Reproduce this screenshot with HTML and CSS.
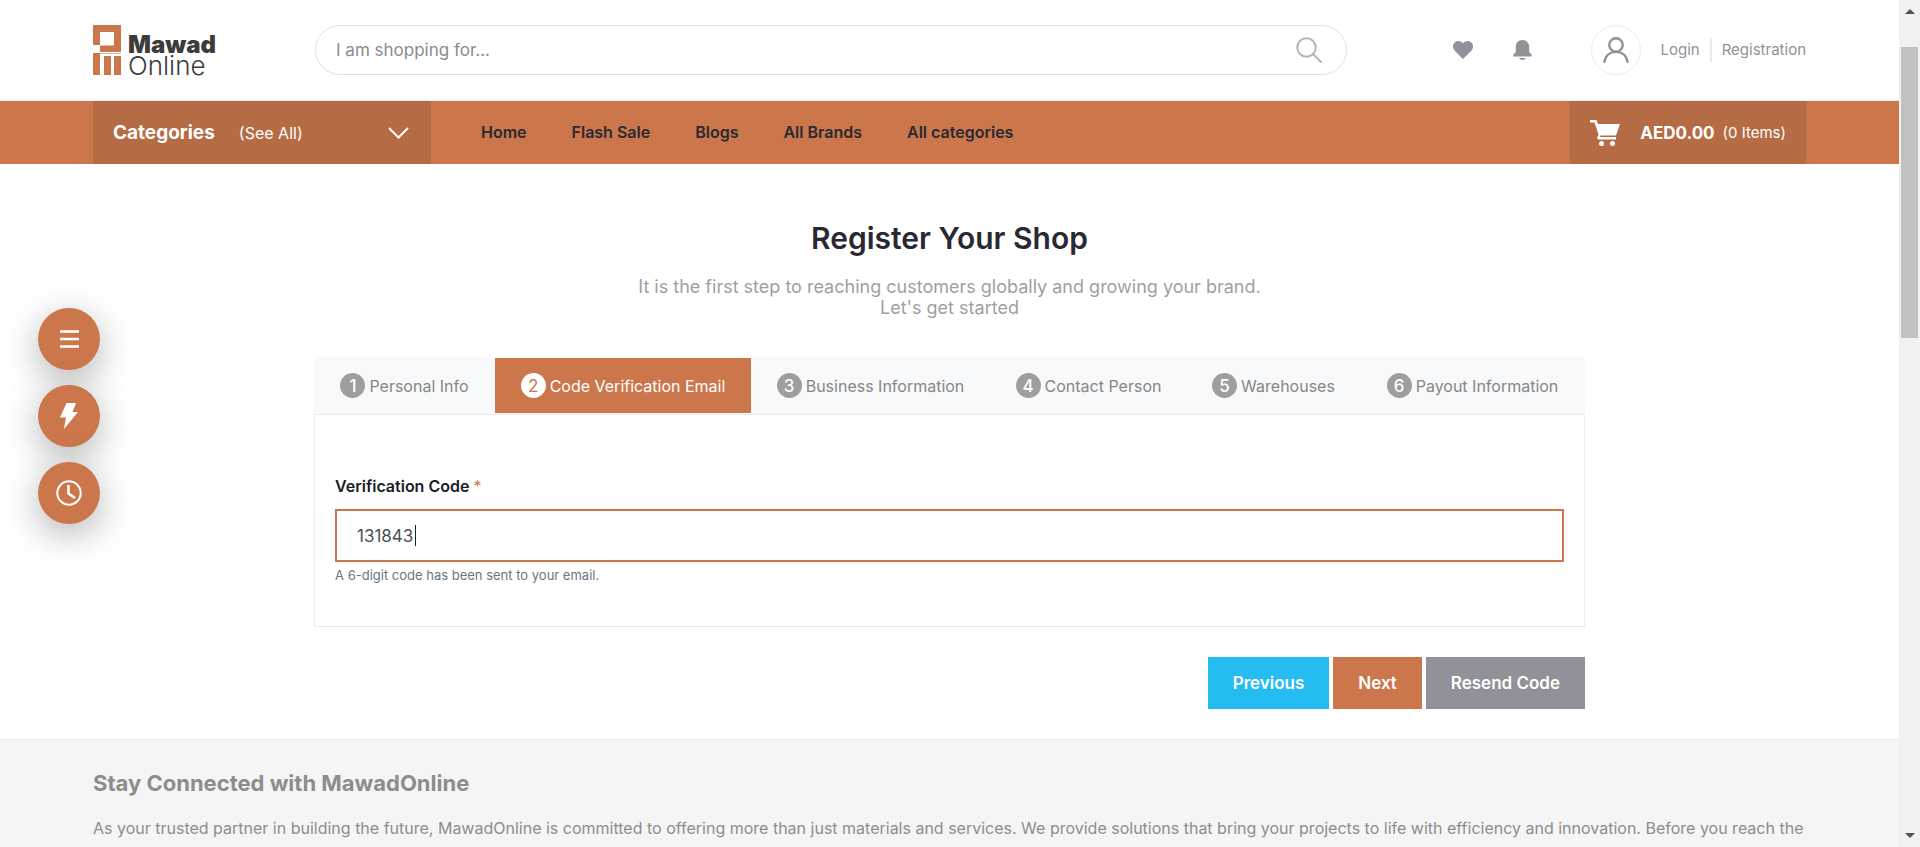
FILE: index.html
```html
<!DOCTYPE html>
<html lang="en">
<head>
<meta charset="utf-8">
<title>MawadOnline - Register Your Shop</title>
<link rel="stylesheet" href="styles.css">
</head>
<body>
<div class="window">
  <div class="page">
    <header class="topbar">
      <a class="logo" href="#" aria-label="Mawad Online">
        <svg class="logo-mark" viewBox="0 0 28 50" aria-hidden="true">
          <path fill="#cb774b" fill-rule="evenodd" d="M0 0H28V27H7V20H0ZM7 7V20.500H21V7Z"/>
          <path fill="#cb774b" d="M0 28H7V50H0ZM11 31H18V50H11ZM21 31H28V50H21Z"/>
          <path fill="#e3b59c" d="M7 28H28V29H7Z"/>
        </svg>
        <span class="logo-text"><b class="logo-strong">Mawad</b><span class="logo-light">Online</span></span>
      </a>
      <form class="search" role="search">
        <input class="search-input" type="text" aria-label="Search" placeholder="I am shopping for...">
        <button class="search-button" type="button" aria-label="Search">
          <svg width="26" height="26" viewBox="0 0 26 26" fill="none" stroke="#b5b5bf" stroke-width="2" stroke-linecap="round"><circle cx="10.500" cy="10.500" r="9.300"/><path d="M17.500 17.500L25 25"/></svg>
        </button>
      </form>
      <div class="account">
        <a class="icon-link" href="#" aria-label="Wishlist"><svg width="20" height="18" viewBox="0 0 20 18" fill="#919199"><path d="M10 18L1.500 9.500C-.5 7.300-.5 3.800 1.500 1.700 3.700-.5 7.500-.6 10 2.500 12.500-.6 16.300-.5 18.500 1.700c2 2.100 2 5.600 0 7.800Z"/></svg></a>
        <a class="icon-link" href="#" aria-label="Notifications"><svg width="19" height="20" viewBox="0 0 19 20" fill="#919199"><path d="M9.500 0C5.500 0 2.800 2.900 2.800 6.800V12L.6 14.200C0 15 .3 16.500 1.400 16.500H17.600C18.700 16.500 19 15 18.400 14.200L16.200 12V6.800C16.200 2.900 13.500 0 9.500 0ZM6.200 18C7 20.600 12 20.600 12.800 18Z"/></svg></a>
        <span class="avatar"><svg width="26" height="26" viewBox="0 0 26 26" fill="none" stroke="#919199" stroke-width="2.400" stroke-linecap="round"><circle cx="13" cy="8" r="6.700"/><path d="M1.500 24.800C2.500 18.500 7 14.900 13 14.900S23.500 18.500 24.500 24.800"/></svg></span>
        <a class="account-link" href="#">Login</a>
        <a class="account-link account-link-last" href="#">Registration</a>
      </div>
    </header>

    <div class="navbar">
      <button class="categories" type="button">
        <b class="categories-title">Categories</b>
        <span class="categories-all">(See All)</span>
        <svg class="categories-arrow" width="21" height="12" viewBox="0 0 21 12" fill="none" stroke="#fff" stroke-width="2"><path d="M1 1L10.500 10.500 20 1"/></svg>
      </button>
      <nav class="menu">
        <a href="#">Home</a>
        <a href="#">Flash Sale</a>
        <a href="#">Blogs</a>
        <a href="#">All Brands</a>
        <a href="#">All categories</a>
      </nav>
      <a class="cart" href="#">
        <svg width="30" height="26" viewBox="0 0 30 26" fill="#fff"><path d="M0 0H6.500L8 4H30L26 15.500H10.500L10 17H26V19.500H8.500C7 19.500 7 18 7.500 17L8.500 14.500 4.500 2.500H0Z"/><circle cx="11.500" cy="23.500" r="2.500"/><circle cx="22.500" cy="23.500" r="2.500"/></svg>
        <b class="cart-total">AED0.00</b>
        <span class="cart-items">(0 Items)</span>
      </a>
    </div>

    <main class="content">
      <h1 class="title">Register Your Shop</h1>
      <p class="lead">It is the first step to reaching customers globally and growing your brand.<br>Let's get started</p>

      <ol class="steps">
        <li class="step"><span class="step-number">1</span>Personal Info</li>
        <li class="step step-active" aria-current="step"><span class="step-number">2</span>Code Verification Email</li>
        <li class="step"><span class="step-number">3</span>Business Information</li>
        <li class="step"><span class="step-number">4</span>Contact Person</li>
        <li class="step"><span class="step-number">5</span>Warehouses</li>
        <li class="step"><span class="step-number">6</span>Payout Information</li>
      </ol>
      <form class="panel">
        <label class="field-label" for="code">Verification Code <span class="required">*</span></label>
        <div class="field">
          <input class="field-input" id="code" type="text" value="131843">
          <span class="field-caret"></span>
        </div>
        <small class="hint">A 6-digit code has been sent to your email.</small>
      </form>
      <div class="actions">
        <button class="button button-previous" type="button">Previous</button>
        <button class="button button-next" type="button">Next</button>
        <button class="button button-resend" type="button">Resend Code</button>
      </div>
    </main>

    <footer class="footer">
      <h2 class="footer-title">Stay Connected with MawadOnline</h2>
      <p class="footer-text">As your trusted partner in building the future, MawadOnline is committed to offering more than just materials and services. We provide solutions that bring your projects to life with efficiency and innovation. Before you reach the</p>
    </footer>

    <div class="shortcuts">
      <button class="shortcut" type="button" aria-label="Menu"><svg width="19" height="18" viewBox="0 0 19 18" stroke="#fff" stroke-width="2.400"><path d="M0 1.500H19M0 9H19M0 16.500H19"/></svg></button>
      <button class="shortcut" type="button" aria-label="Flash deals"><svg width="18" height="26" viewBox="0 0 18 26" fill="#fff"><path d="M6.500 0H16L12.500 9H18L4 26 6 14.500H0Z"/></svg></button>
      <button class="shortcut" type="button" aria-label="Recent"><svg width="26" height="26" viewBox="0 0 26 26" fill="none" stroke="#fff" stroke-width="2"><circle cx="13" cy="13" r="11.700"/><path stroke-width="2.600" d="M12.500 5V13.500L19 18"/></svg></button>
    </div>
  </div>

  <div class="scrollbar" aria-hidden="true">
    <svg class="scrollbar-arrow" width="10" height="5" viewBox="0 0 10 5"><path fill="#505050" d="M5 0L10 5H0Z"/></svg>
    <div class="scrollbar-track"><div class="scrollbar-thumb"></div></div>
    <svg class="scrollbar-arrow" width="10" height="5" viewBox="0 0 10 5"><path fill="#505050" d="M0 0H10L5 5Z"/></svg>
  </div>
</div>
</body>
</html>
```
FILE: styles.css
```css
* { box-sizing: border-box; }

body {
  margin: 0;
  background: #fff;
  color: #292933;
  font-family: Inter, "Liberation Sans", sans-serif;
  font-size: 16px;
}

a { color: inherit; text-decoration: none; }
button, input { font: inherit; }
button { border: 0; cursor: pointer; }
svg { display: block; flex: none; }

.window { display: flex; height: 100vh; overflow: hidden; }
.page { flex: 1; min-width: 0; overflow: hidden; display: flex; flex-direction: column; position: relative; }

/* Header */
.topbar {
  flex: none;
  display: flex;
  align-items: center;
  padding: 25px 93px;
  border-bottom: 1px solid #ebebf0;
}
.logo { display: flex; align-items: flex-end; gap: 7px; width: 222px; color: #3c3c3b; }
.logo-mark { width: 28px; height: 50px; }
.logo-text { display: flex; flex-direction: column; }
.logo-strong { font-size: 24px; line-height: 22px; font-weight: 900; }
.logo-light { font-size: 26px; line-height: 19px; font-weight: 300; }

.search {
  flex: 1;
  display: flex;
  align-items: center;
  height: 50px;
  padding: 0 24px 0 20px;
  border: 1px solid #dfdfe6;
  border-radius: 25px;
}
.search-input { flex: 1; min-width: 0; border: 0; padding: 0; outline: 0; background: none; font-size: 17px; }
.search-input::placeholder { color: #898b92; opacity: 1; }
.search-button { padding: 0; background: none; }

.account { width: 459px; display: flex; align-items: center; justify-content: flex-end; color: #919199; font-size: 15px; }
.icon-link { margin-right: 40px; }
.avatar {
  display: grid;
  place-items: center;
  width: 50px;
  height: 50px;
  margin: 0 20px 0 19px;
  border: 1px solid #ededf2;
  border-radius: 50%;
}
.account-link { line-height: 24px; }
.account-link-last { margin-left: 10px; padding-left: 10px; border-left: 2px solid #ebebeb; }

/* Navigation */
.navbar { flex: none; display: flex; height: 63px; padding: 0 93px; background: #cb774b; }
.categories {
  display: flex;
  align-items: center;
  width: 338px;
  padding: 0 22px 0 20px;
  background: #b56b43;
  color: #fff;
}
.categories-title { font-size: 19px; }
.categories-all { margin-left: 24px; }
.categories-arrow { margin-left: auto; }
.menu { flex: 1; display: flex; align-items: center; gap: 45px; padding: 0 0 2px 50px; font-weight: 600; }
.cart {
  display: flex;
  align-items: center;
  padding: 0 20px;
  background: #b56b43;
  color: #fff;
}
.cart-total { margin: 0 8px 0 20px; font-size: 17px; }
.cart-items { font-size: 15px; }

/* Registration form */
.content { flex: none; width: 1271px; max-width: 100%; margin: 0 auto; padding: 55px 0 30px; }
.title { margin: 0; font-size: 30px; line-height: 38px; font-weight: 600; text-align: center; }
.lead { margin: 19px 0 39px; color: #9f9f9f; font-size: 18px; line-height: 21px; text-align: center; }

.steps {
  display: grid;
  grid-template-columns: 181fr 256fr 239fr 197fr 173fr 225fr;
  margin: 0;
  padding: 0;
  list-style: none;
  background: #f8f9fb;
}
.step {
  display: flex;
  align-items: center;
  justify-content: center;
  gap: 4px;
  height: 57px;
  color: #868686;
  white-space: nowrap;
}
.step-active { height: 55px; margin-top: 1px; background: #cb774b; color: #fff; }
.step-number {
  display: grid;
  place-items: center;
  width: 25px;
  height: 25px;
  border-radius: 50%;
  background: #a09d9d;
  color: #fff;
  font-size: 17px;
  font-weight: 500;
}
.step-active .step-number { background: #fff; color: #cb774b; font-weight: 400; }

.panel { padding: 61px 20px 42px; border: 1px solid #ebebf0; }
.field-label { display: block; margin-bottom: 13px; color: #1b1b28; line-height: 20px; font-weight: 600; }
.required { color: #cb774b; font-weight: 400; }
.field { position: relative; }
.field-input {
  display: block;
  width: 100%;
  height: 53px;
  padding: 0 20px;
  border: 2px solid #cb774b;
  outline: 0;
  color: #495057;
  font-size: 17px;
}
.field-caret { position: absolute; left: 80px; top: 16px; width: 1px; height: 21px; background: #222; }
.hint { display: block; margin-top: 4px; color: #6c757d; font-size: 13px; line-height: 18px; }

.actions { display: flex; justify-content: flex-end; gap: 4px; margin-top: 30px; }
.button { height: 52px; padding: 0 25px; color: #fff; font-size: 17px; font-weight: 600; }
.button-previous { background: #25bcf1; }
.button-next { background: #cb774b; }
.button-resend { background: #919199; }

/* Footer */
.footer { flex: 1 0 auto; padding: 28px 93px 0; border-top: 1px solid #ebebf0; background: #f5f5f5; color: #8d8d8d; }
.footer-title { margin: 0 0 18px; font-size: 22px; line-height: 30px; }
.footer-text { margin: 0; line-height: 24px; }

/* Floating shortcuts */
.shortcuts { position: absolute; left: 38px; top: 308px; display: grid; gap: 15px; }
.shortcut {
  display: grid;
  place-items: center;
  width: 62px;
  height: 62px;
  padding: 0;
  border-radius: 50%;
  background: #cb774b;
  box-shadow: 0 10px 36px rgba(0, 0, 0, .3);
}

/* Scrollbar */
.scrollbar {
  display: flex;
  flex-direction: column;
  align-items: center;
  width: 21px;
  padding: 9px 0;
  background: #f1f1f1;
}
.scrollbar-track { flex: 1; width: 17px; padding-top: 33px; }
.scrollbar-thumb { height: 37%; background: #c1c1c1; }
```
